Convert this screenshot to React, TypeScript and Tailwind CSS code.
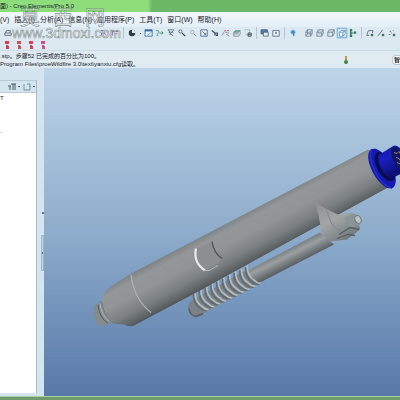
import type { ReactNode } from 'react';

const menus = ['分析(A)', '信息(N)', '应用程序(P)', '工具(T)', '窗口(W)', '帮助(H)'];

const glyphs: Record<string, ReactNode> = {
  printer: <path d="M1 5h8v3H1zM2 5l1-3h5l-1 3" fill="#dce8ee" />,
  axis: <><path d="M1 2h3M6 2h3M2 8V5h5" stroke="#3a58c8" /><path d="M3 4l5 4" stroke="#d0609a" /></>,
  axisRed: <><path d="M2 8V3h4" stroke="#4060c0" /><path d="M5 3h4M4 6h4" stroke="#d04070" /></>,
  sphere: <><circle cx="5" cy="5" r="4" fill="#303c48" stroke="none" /><path d="M5 1a4 4 0 0 1 4 4H5z" fill="#dbe8f0" stroke="none" /></>,
  repaint: <><path d="M0 1h9v8H0z" fill="#e6f4fc" stroke="#3468a0" /><path d="M0 2h9" stroke="#3468a0" strokeWidth="2" /><path d="M3 8l5-4" stroke="#40a0d0" /></>,
  spin: <><path d="M0 2h3v2L1 8h2" stroke="#48a080" /><path d="M4 5h5M7 3l2 2-2 2" stroke="#3c7860" /></>,
  orient: <path d="M1 1h8M2 4h6M2 1l2 5 4-4M3 7h3M5 6l3 3" stroke="#5c6c82" />,
  zoomIn: <><circle cx="3" cy="3" r="2" fill="#dce6f2" /><path d="M5 5l4 4" stroke="#384450" strokeWidth="1.5" /></>,
  zoomOut: <><circle cx="4" cy="4" r="2.2" stroke="#9aa8b6" /><path d="M6 6l3 3" stroke="#74828e" /></>,
  refit: <><path d="M1 1h8v8H1z" fill="#eaf4fb" stroke="#3e5484" /><path d="M3 3l4 4M7 5v2H5" /></>,
  reorient: <path d="M1 2l4 3v3M4 5h4v3H6" stroke="#3c4d60" strokeWidth="1.5" />,
  saved: <><path d="M0 8l3-5M4 4h3M5 6l4 3" stroke="#71808c" /><path d="M3 2h2M6 2h3M7 5h2" stroke="#c25168" /></>,
  layers: <><path d="M1 4l2-2h6L7 4z" fill="#72b4a4" stroke="#649482" /><path d="M1 4v5h6l2-3V3M1 6h6" stroke="#748290" /></>,
  view: <><path d="M1 1h6v6H1" stroke="#92a0ac" strokeDasharray="2 1" /><path d="M5 5h4v4H5zM5 7h4" stroke="#333e48" /></>,
  windows: <><path d="M0 1h8v5H0z" fill="#5878ac" stroke="#38568c" /><path d="M3 4h6v5H3z" fill="#e6f1f6" stroke="#4a6078" /></>,
  close: <><path d="M1 2h8v7H1z" fill="#eaf3f7" stroke="#4b6078" /><path d="M4 4l2 2M6 4L4 6" /></>,
  help: <><circle cx="5" cy="4" r="3" fill="#378fce" stroke="#b5dcf1" /><path d="M6 6v3" stroke="#234f80" /></>,
  wire: <path d="M1 4h6v5H1zM3 1h6v5H3zM1 4l2-3M7 4l2-3M7 9l2-3M1 9l2-3" stroke="#71808c" />,
  hidden: <><path d="M3 1v5h6M1 9l2-3" stroke="#a5b2bc" /><path d="M1 4h6v5H1zM1 4l2-3h6L7 4M9 1v5L7 9" stroke="#71808c" /></>,
  cube: <path d="M1 4h6v5H1zM1 4l2-3h6L7 4M9 1v5L7 9" stroke="#657a88" />,
  shaded: <><path d="M-1-1h12v12H-1z" fill="#c4e6fa" stroke="#5c9bc4" /><path d="M2 4h4v5H2zM2 4l2-2h5L6 4M9 2v4L6 9" fill="#fff" stroke="#628aaa" /></>,
  tree: <><path d="M2 1v8M3 5h3" stroke="#3c8160" /><path d="M1 0h3v3H1zM1 4h3v2H1zM1 7h3v3H1zM6 3h3v3H6z" fill="#317a5a" stroke="none" /></>,
  plane: <><path d="M1 8l2-6h6L8 5M1 8h3" /><path d="M6 6h3v3H6z" fill="#40745c" stroke="none" /></>,
  line: <><path d="M1 9l6-8" /><path d="M6 6h3v3H6z" fill="#40745c" stroke="none" /></>,
  point: <><path d="M2 3h2M6 2h1M1 7h2M4 5h1" /><path d="M6 6h3v3H6z" fill="#40745c" stroke="none" /></>,
};

function Icon({ name }: { name: string }) {
  return (
    <svg className="size-2 shrink-0 overflow-visible" viewBox="0 0 10 10" fill="none" stroke="#53626f" aria-hidden="true">
      {glyphs[name]}
    </svg>
  );
}

function Tools({ names }: { names: string[] }) {
  return (
    <div className="flex shrink-0 gap-[3px] px-1">
      {names.map((name) => (
        <button key={name} aria-label={name} className="block"><Icon name={name} /></button>
      ))}
    </div>
  );
}

function Separator() {
  return <span className="h-3 w-px shrink-0 bg-[#b5c5d1]" />;
}

function Watermark() {
  return (
    <svg
      className="pointer-events-none absolute left-0 top-0 h-12 w-32 font-['Liberation_Sans','Noto_Sans_CJK_SC',sans-serif]"
      viewBox="0 0 128 48"
      fill="#ffffff"
      fillOpacity="0.35"
      stroke="#526461"
      strokeOpacity="0.7"
      strokeWidth="0.6"
    >
      <text x="20" y="25" fontSize="20">莫</text>
      <text x="53" y="25" fontSize="20">西</text>
      <text x="85" y="25" fontSize="20">网</text>
      <text x="12" y="38" fontSize="14" fillOpacity="0.9">www.3dmoxi.com</text>
    </svg>
  );
}

const coils = [0, 1, 2, 3, 4, 5, 6, 7, 8, 9];

function Model() {
  return (
    <svg className="block h-full w-full" viewBox="44 68 356 329" preserveAspectRatio="xMaxYMid slice" aria-label="Model">
      <defs>
        <linearGradient id="tube" gradientUnits="userSpaceOnUse" x1="200" y1="238" x2="223" y2="281">
          <stop offset="0" stopColor="#7f8487" />
          <stop offset="0.14" stopColor="#949799" />
          <stop offset="0.4" stopColor="#929597" />
          <stop offset="0.7" stopColor="#7a7f82" />
          <stop offset="0.9" stopColor="#5c6164" />
          <stop offset="1" stopColor="#464b4f" />
        </linearGradient>
        <linearGradient id="rod" gradientUnits="userSpaceOnUse" x1="286" y1="250" x2="294" y2="266">
          <stop offset="0" stopColor="#777d80" />
          <stop offset="0.35" stopColor="#9b9fa1" />
          <stop offset="1" stopColor="#555c61" />
        </linearGradient>
        <linearGradient id="bracket" x1="0" y1="0" x2="0.7" y2="1">
          <stop offset="0" stopColor="#8b8f91" />
          <stop offset="0.5" stopColor="#a2a6a7" />
          <stop offset="1" stopColor="#70777b" />
        </linearGradient>
        <linearGradient id="cap" x1="0" y1="0" x2="0.5" y2="1">
          <stop offset="0" stopColor="#10169a" />
          <stop offset="0.4" stopColor="#1a20c0" />
          <stop offset="1" stopColor="#080c68" />
        </linearGradient>
      </defs>

      {/* side rod */}
      <path d="M246 272L320 233L334 245L258 284Z" fill="url(#rod)" />
      <path d="M190 302L246 271L257 284L203 314Q201 318 196 317L190 315Q186 309 190 302Z" fill="#7b8287" />
      <path d="M189 309Q190 316 196 317L203 314" fill="none" stroke="#555e65" strokeWidth="1.5" />
      {coils.map((i) => (
        <g key={i} transform={`translate(${200 + i * 5.8} ${302 - i * 2.9}) rotate(-27)`}>
          <path d="M-2 -10Q-7 -2 -3 6Q-1 10 3 11" fill="none" stroke="#626d76" strokeWidth="2" />
          <path d="M0 -11Q-5 -2 0 6Q1 10 4 11" fill="none" stroke="#b7bcbf" strokeWidth="1.7" />
        </g>
      ))}

      {/* barrel */}
      <path d="M104 300L95 306Q92 312 95 320Q98 327 103 327L114 322Z" fill="#858a8d" />
      <path d="M98 305Q99 318 108 324M102 302Q104 315 112 322" fill="none" stroke="#565e63" />
      <path d="M100 304Q101 315 109 322" fill="none" stroke="#b4b8ba" />
      <path d="M108 289L131 274L368 150Q385 157 388 188L280 247L200 291L134 326Q129 328 124 325L113 324Q104 316 102 302Q102 294 108 289Z" fill="url(#tube)" />
      <path d="M131 275Q134 300 151 313" fill="none" stroke="#acb0b2" strokeWidth="1.3" />

      {/* wrench flat */}
      <path d="M195 250L212 242Q215 254 222 261L205 271Q195 263 195 250Z" fill="#8b8f91" />
      <path d="M196 249Q193 263 205 271" fill="none" stroke="#e5e9eb" strokeWidth="2.2" />
      <path d="M204 271L209 271L218 266" fill="none" stroke="#b5babc" />
      <path d="M212 242Q214 254 222 259" fill="none" stroke="#4c5459" strokeWidth="1.4" />

      {/* bracket */}
      <path d="M314 202Q326 210 338 215L352 213L358 219L360 230L347 240L330 242L321 234Q320 215 314 202Z" fill="url(#bracket)" />
      <path d="M326 210L332 225L343 234" fill="none" stroke="#7e8589" />
      <path d="M345 218L354 214L361 218L360 225L350 229Z" fill="#8d9498" />
      <ellipse cx="358" cy="220" rx="3" ry="4" fill="#bcc3c6" stroke="#717a80" transform="rotate(-25 358 220)" />
      <path d="M339 235L350 228L359 230M337 239L348 235L355 236" fill="none" stroke="#555f65" strokeWidth="1.3" />

      {/* end cap */}
      <ellipse cx="382" cy="169" rx="10" ry="22" fill="#151bb0" transform="rotate(-29 382 169)" />
      <path d="M371 150Q369 160 375 172Q381 185 392 189" fill="none" stroke="#2935cf" strokeWidth="1.2" />
      <ellipse cx="385" cy="167" rx="8" ry="16" fill="#080d50" transform="rotate(-29 385 167)" />
      <path d="M378 156L394 146Q402 146 407 161L406 172L391 179Q379 173 378 156Z" fill="url(#cap)" />
      <ellipse cx="399" cy="159" rx="6" ry="13" fill="#12165f" transform="rotate(-26 399 159)" />
      <path d="M394 153l3 1 2-2 2 3M396 158l3 1 2 3M397 163l4 2" fill="none" stroke="#968678" />
    </svg>
  );
}

export default function App() {
  return (
    <div className="relative flex h-screen flex-col overflow-hidden bg-[#dce9f1] font-['Liberation_Sans','Noto_Sans_CJK_SC',sans-serif] text-[#18222b]">
      <header className="flex h-3 shrink-0 items-center whitespace-nowrap bg-linear-to-r from-[#8ddd7b] from-37% to-[#6bb866] to-38% text-[6px] leading-none">
        面) - Creo Elements/Pro 5.0
      </header>

      <nav className="flex h-[15px] shrink-0 items-center gap-[5px] whitespace-nowrap bg-linear-to-b from-[#f2f7fb] to-[#e3eef6] text-[7px] leading-none">
        <button>(V)</button>
        <button>插入(I)</button>
        {menus.map((menu) => <button key={menu}>{menu}</button>)}
      </nav>

      {/* toolbars */}
      <div className="flex h-3 shrink-0 items-center overflow-hidden">
        <Tools names={['printer']} />
        <div className="w-20 shrink-0" />
        <Tools names={['axis', 'axisRed']} />
        <Separator />
        <Tools names={['sphere']} />
        <span className="size-px shrink-0 bg-[#4b5661]" />
        <Tools names={['repaint', 'spin', 'orient', 'zoomIn', 'zoomOut', 'refit', 'reorient', 'saved', 'layers', 'view']} />
        <Separator />
        <Tools names={['windows', 'close']} />
        <Separator />
        <Tools names={['help']} />
        <Tools names={['wire', 'hidden', 'cube', 'shaded', 'tree']} />
        <Separator />
        <Tools names={['plane', 'line', 'point']} />
      </div>
      <div className="flex h-3 shrink-0 items-center gap-2 border-b border-[#cbdce7] pl-[5px]">
        {['#d83b54', '#cf4c58', '#d83b62', '#d04b88'].map((color) => (
          <svg key={color} className="h-2 w-1" viewBox="0 0 4 8" fill={color} aria-hidden="true">
            <path d="M0 0h4v3H0zM1 4h2v1h1v3H1z" />
          </svg>
        ))}
      </div>

      {/* message area */}
      <div className="flex h-[17px] shrink-0 items-center overflow-hidden whitespace-nowrap bg-[#dfebf1] text-[6px] leading-[8px]">
        <div className="flex-1">
          <p>.stp。步骤52 已完成的百分比为100。</p>
          <p>Program Files\proeWildfire 3.0\text\yanxiu.cfg读取。</p>
        </div>
        <svg className="mr-11 h-2 w-1" viewBox="0 0 4 8" aria-hidden="true">
          <path d="M1 0h2v4H1z" fill="#b99b42" />
          <circle cx="2" cy="6" r="2" fill="#428342" />
        </svg>
        <button className="rounded-l-sm border border-r-0 border-[#bacbd5] bg-white pl-px font-bold">智</button>
      </div>

      <div className="flex min-h-0 flex-1">
        <aside className="flex w-11 shrink-0 bg-[#d5e5ef] pb-[3px] pt-3">
          <div className="flex w-[37px] flex-col border-r border-[#a9bbc7]">
            <div className="flex h-[13px] items-center justify-end gap-[3px] border-y border-[#bacbd6] pr-px text-[#4b5a66]">
              <svg className="h-2 w-3" viewBox="0 0 12 8" fill="none" stroke="currentColor" aria-hidden="true">
                <path d="M0 3h3M2 3v4M3 1h5M5 1v6M7 1v6" /><path d="M10 3h2v1h-2z" fill="currentColor" stroke="none" />
              </svg>
              <svg className="h-2 w-3" viewBox="0 0 12 8" fill="none" stroke="currentColor" aria-hidden="true">
                <path d="M1 1v6h6V3M4 1h3v3" stroke="#7792a7" /><path d="M10 3h2v1h-2z" fill="currentColor" stroke="none" />
              </svg>
            </div>
            <div className="flex-1 bg-white pt-0.5 text-[6px] leading-none">
              <p>T</p>
              <p className="pt-7 text-[#7d8b95]">-</p>
            </div>
          </div>
          <div className="flex flex-1 flex-col items-end pt-[132px]">
            <span className="size-0.5 bg-[#58738b]" />
            <div className="mt-[21px] flex h-9 w-[3px] items-center border border-[#a2b7c8] bg-[#bed1df]">
              <span className="h-0.5 w-full bg-[#58738b]" />
            </div>
          </div>
        </aside>
        <main className="min-w-0 flex-1 bg-linear-to-b from-[#bdd5e9] via-[#8eaccb] to-[#5879a9]">
          <Model />
        </main>
      </div>

      <footer className="h-1 shrink-0 border-t border-[#a5cf9e] bg-[#719b6e]" />
      <Watermark />
    </div>
  );
}
